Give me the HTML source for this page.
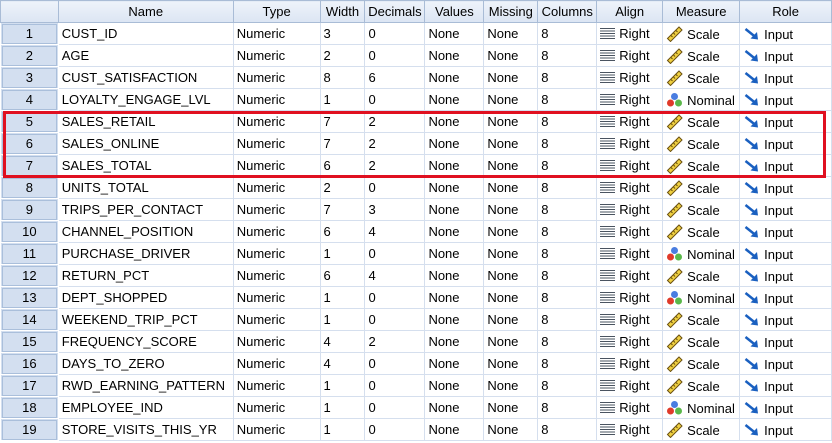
<!DOCTYPE html>
<html><head><meta charset="utf-8"><style>
body{margin:0;width:832px;height:443px;overflow:hidden;background:#fff;font-family:"Liberation Sans",Arial,sans-serif;font-size:13px;color:#000;position:relative}
table{border-collapse:collapse;table-layout:fixed;position:absolute;left:0;top:0}
td,th{height:21px;padding:0 0 0 3px;border-right:1px solid #d5dfee;border-bottom:1px solid #d5dfee;white-space:nowrap;overflow:hidden;text-align:left;font-weight:normal}
th{background:linear-gradient(#eef3fa,#dbe5f3);border:1px solid #a9bcd6;text-align:center;padding:0}
td.rh{background:#d3dff0;border:1px solid #fff;outline:1px solid #aabfdb;outline-offset:-2px;text-align:center;padding:0}
.al{display:inline-block;width:15px;height:11px;vertical-align:-1px;margin-right:4px;background:repeating-linear-gradient(#4a5460 0 1.2px,transparent 1.2px 2.5px)}
.ic{display:inline-block;width:17px;height:16px;vertical-align:-3px;margin-right:4px}
#red{position:absolute;left:3px;top:111px;width:817px;height:61px;border:3px solid #e01020}
</style></head><body>
<table>
<colgroup><col style="width:58px"><col style="width:175px"><col style="width:87px"><col style="width:45px"><col style="width:60px"><col style="width:59px"><col style="width:54px"><col style="width:59px"><col style="width:66px"><col style="width:77px"><col style="width:92px"></colgroup>
<tr><th></th><th>Name</th><th>Type</th><th>Width</th><th>Decimals</th><th>Values</th><th>Missing</th><th>Columns</th><th>Align</th><th>Measure</th><th>Role</th></tr>
<tbody id="b">
</tbody></table>
<div id="red"></div>
<svg width="0" height="0" style="position:absolute"><defs>
<g id="sc"><path d="M1 12.5 L12.5 1 L15.5 4 L4 15.5 Z" fill="#f0d040" stroke="#6a5010" stroke-width="1"/><path d="M4.5 9.5l1.5 1.5M7 7l1.5 1.5M9.5 4.5l1.5 1.5" stroke="#6a5010"/></g>
<g id="nm"><circle cx="8" cy="4.5" r="3.5" fill="#4a7de0"/><circle cx="4" cy="11" r="3.5" fill="#e03a2a"/><circle cx="12" cy="11" r="3.5" fill="#5ab84a"/></g>
<g id="in"><path d="M2 3 L12 11" stroke="#1a60c0" stroke-width="2.5"/><path d="M7 12.5 L14.5 13.5 L13.5 6 Z" fill="#1a60c0"/></g>
</defs></svg>
<script>
var r=[["CUST_ID",3,0,"s"],["AGE",2,0,"s"],["CUST_SATISFACTION",8,6,"s"],["LOYALTY_ENGAGE_LVL",1,0,"n"],["SALES_RETAIL",7,2,"s"],["SALES_ONLINE",7,2,"s"],["SALES_TOTAL",6,2,"s"],["UNITS_TOTAL",2,0,"s"],["TRIPS_PER_CONTACT",7,3,"s"],["CHANNEL_POSITION",6,4,"s"],["PURCHASE_DRIVER",1,0,"n"],["RETURN_PCT",6,4,"s"],["DEPT_SHOPPED",1,0,"n"],["WEEKEND_TRIP_PCT",1,0,"s"],["FREQUENCY_SCORE",4,2,"s"],["DAYS_TO_ZERO",4,0,"s"],["RWD_EARNING_PATTERN",1,0,"s"],["EMPLOYEE_IND",1,0,"n"],["STORE_VISITS_THIS_YR",1,0,"s"]];
var h="";r.forEach(function(x,i){h+='<tr><td class="rh">'+(i+1)+'</td><td>'+x[0]+'</td><td>Numeric</td><td>'+x[1]+'</td><td>'+x[2]+'</td><td>None</td><td>None</td><td>8</td><td><span class="al"></span>Right</td><td><svg class="ic" viewBox="0 0 16 16"><use href="#'+(x[3]=="s"?"sc":"nm")+'"/></svg>'+(x[3]=="s"?"Scale":"Nominal")+'</td><td><svg class="ic" viewBox="0 0 16 16"><use href="#in"/></svg>Input</td></tr>';});
document.getElementById("b").innerHTML=h;
</script>
</body></html>
